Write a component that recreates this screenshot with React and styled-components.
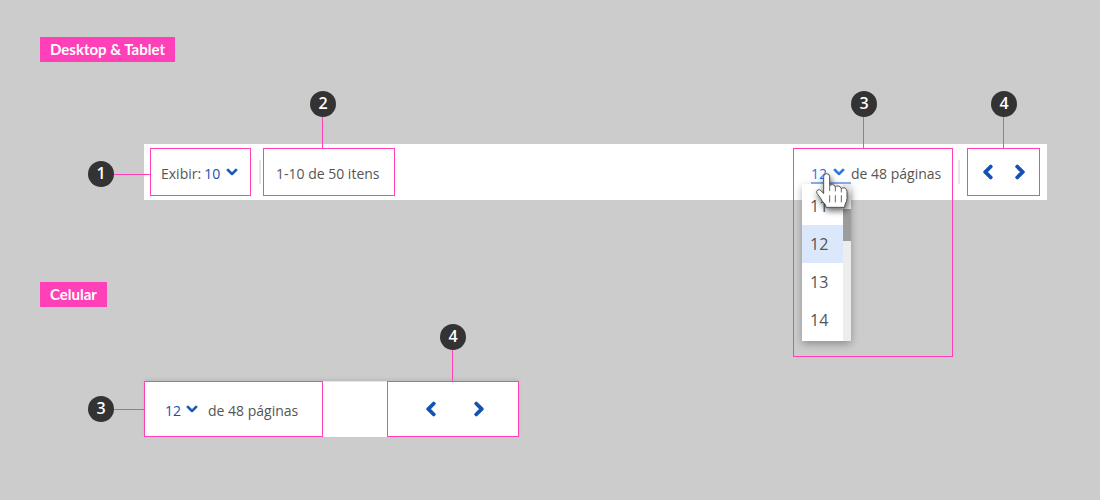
import React from "react";
import styled, { createGlobalStyle, css } from "styled-components";
import { FaChevronDown, FaChevronLeft, FaChevronRight } from "react-icons/fa";

const pink = "#ff40b8";
const blue = "#1351b4";
const hoverBlue = "#2670e8";
const textFont = '"Open Sans", "Noto Sans", sans-serif';
const labelFont = 'Lato, "Open Sans", sans-serif';

const GlobalStyle = createGlobalStyle`
  *, *::before, *::after { box-sizing: border-box; }
  body {
    margin: 0;
    background: #ccc;
    color: #555;
    font: 14px/24px ${textFont};
  }
`;

const Page = styled.main`
  padding: 37px 53px 60px 40px;
`;

const Section = styled.section`
  & + & { margin-top: 82px; }
`;

const Tag = styled.h2`
  width: fit-content;
  margin: 0;
  padding: 0 10px;
  background: ${pink};
  color: #fff;
  font: 700 15px/25px ${labelFont};
`;

const Bar = styled.nav`
  display: flex;
  align-items: flex-start;
  height: 56px;
  margin-left: 104px;
  background: #fff;
  ${(p) =>
    p.$compact
      ? css`
          max-width: 375px;
          margin-top: 74px;
          box-shadow: 0 -2px 3px rgba(0, 0, 0, 0.08), inset 0 1px #dbe8fb;
        `
      : css`
          margin-top: 82px;
          padding: 4px 7px 4px 6px;
        `}
`;

const Region = styled.div`
  position: relative;
  flex: none;
  width: ${(p) => p.$width}px;
  height: ${(p) => p.$height || 48}px;
  border: 1px solid ${pink};
`;

const Content = styled.div`
  display: flex;
  align-items: center;
  gap: ${(p) => p.$gap || 0}px;
  height: ${(p) => p.$height || 46}px;
  padding: 4px 0 0 ${(p) => p.$left}px;
  white-space: nowrap;
`;

const Divider = styled.span`
  flex: none;
  width: 2px;
  height: 24px;
  margin: 12px ${(p) => p.$after}px 0 ${(p) => p.$before}px;
  background: #e6e6e6;
`;

const Spacer = styled.span`
  flex: 1;
`;

const Callout = styled.span`
  position: absolute;
  display: flex;
  ${(p) =>
    p.$side === "left"
      ? css`
          right: calc(100% + 1px);
          top: ${p.$at}px;
          &::after {
            width: ${p.$line}px;
            height: 1px;
            margin-top: 13px;
          }
        `
      : css`
          flex-direction: column;
          bottom: calc(100% + 1px);
          left: ${p.$at}px;
          &::after {
            width: 1px;
            height: ${p.$line}px;
            margin-left: 12px;
          }
        `}
  &::after {
    content: "";
    background: ${pink};
  }
`;

const Badge = styled.span`
  width: 26px;
  height: 26px;
  border-radius: 50%;
  background: #333;
  color: #fff;
  font: 600 16px/25px ${textFont};
  text-align: center;
`;

const Picker = styled.span`
  position: relative;
  display: inline-flex;
  color: ${(p) => (p.$open ? hoverBlue : blue)};
  & > svg {
    position: absolute;
    top: 2px;
    right: ${(p) => p.$inset || 0}px;
    overflow: visible;
    stroke: currentColor;
    stroke-width: 40;
    pointer-events: none;
  }
`;

const Select = styled.select`
  appearance: none;
  width: ${(p) => p.$width}px;
  height: 20px;
  margin: 0;
  padding: 0;
  border: 0;
  border-radius: 0;
  background: none;
  color: inherit;
  font: inherit;
  line-height: 20px;
  cursor: pointer;
  outline: none;
  ${(p) => p.$open && "box-shadow: inset 0 -2px #8fb3f2;"}
`;

const Menu = styled.div`
  position: absolute;
  top: 100%;
  right: 0;
  display: flex;
  width: 49px;
  height: 157px;
  background: #fff;
  box-shadow: 0 3px 8px rgba(0, 0, 0, 0.3);
`;

const Options = styled.ul`
  flex: 1;
  margin: 0;
  padding: 3px 0 0;
  list-style: none;
`;

const Option = styled.li`
  height: 38px;
  padding-left: 8px;
  background: ${(p) => (p.$selected ? "#dbe8fb" : "transparent")};
  color: #555;
  font-size: 16px;
  line-height: 38px;
`;

const Track = styled.div`
  width: 8px;
  padding-top: 25px;
  background: #ededed;
`;

const Thumb = styled.div`
  height: 32px;
  background: #9c9c9c;
`;

const Pointer = styled.svg`
  && {
    top: 7px;
    left: 3px;
    right: auto;
    stroke: none;
    stroke-width: 3;
    filter: drop-shadow(1px 3px 3px rgba(0, 0, 0, 0.6));
  }
`;

const Arrow = styled.button`
  display: flex;
  align-items: center;
  justify-content: center;
  width: 32px;
  height: 32px;
  padding: 0;
  border: 0;
  background: none;
  color: ${blue};
  cursor: pointer;
  & > svg {
    overflow: visible;
    stroke: currentColor;
    stroke-width: 40;
  }
`;

const Arrows = styled.div`
  display: flex;
  align-items: center;
  justify-content: center;
  gap: ${(p) => p.$gap || 0}px;
  height: 100%;
  padding-left: ${(p) => p.$left || 0}px;
`;

function Mark({ n, side = "top", line = 31, at }) {
  return (
    <Callout $side={side} $line={line} $at={at}>
      <Badge>{n}</Badge>
    </Callout>
  );
}

function HandPointer() {
  return (
    <Pointer width="35" height="40" viewBox="0 0 105 120" aria-hidden="true">
      <path
        d="M29 68V17Q29 8 38 8Q47 8 47 17V44Q50 41 55 41Q62 41 64 48Q67 44 73 45Q80 46 82 53Q86 49 92 51Q99 54 99 62V82Q99 90 95 96Q92 101 92 109H36Q36 101 31 97Q24 92 20 82L9 67Q6 60 11 57Q17 54 22 60Z"
        fill="#fff"
        stroke="#555"
        strokeLinejoin="round"
      />
      <path
        d="M47 44V59M64 48V60M82 53V63M47 74V93M64 74V93M82 74V93"
        fill="none"
        stroke="#666"
        strokeLinecap="round"
      />
    </Pointer>
  );
}

function PageArrows({ gap, left }) {
  return (
    <Arrows $gap={gap} $left={left}>
      <Arrow type="button" aria-label="Página anterior">
        <FaChevronLeft size={16} />
      </Arrow>
      <Arrow type="button" aria-label="Próxima página">
        <FaChevronRight size={16} />
      </Arrow>
    </Arrows>
  );
}

export default function App() {
  return (
    <>
      <GlobalStyle />
      <Page>
        <Section>
          <Tag>Desktop &amp; Tablet</Tag>
          <Bar aria-label="Paginação desktop e tablet">
            <Region $width={101}>
              <Mark n={1} side="left" line={36} at={12} />
              <Content $left={10} $gap={3}>
                <label htmlFor="per-page">Exibir:</label>
                <Picker>
                  <Select id="per-page" $width={34} defaultValue="10">
                    <option>10</option>
                    <option>20</option>
                    <option>50</option>
                  </Select>
                  <FaChevronDown size={12} />
                </Picker>
              </Content>
            </Region>
            <Divider $before={8} $after={2} />
            <Region $width={132}>
              <Mark n={2} at={46} />
              <Content $left={12}>1-10 de 50 itens</Content>
            </Region>
            <Spacer />
            <Region $width={160} $height={209}>
              <Mark n={3} at={57} />
              <Content $left={17}>
                <Picker $open $inset={6}>
                  <Select id="page" aria-label="Página" $width={40} $open defaultValue="12">
                    <option>11</option>
                    <option>12</option>
                    <option>13</option>
                    <option>14</option>
                  </Select>
                  <FaChevronDown size={12} />
                  <Menu>
                    <Options role="listbox" aria-label="Páginas">
                      {[11, 12, 13, 14].map((n) => (
                        <Option key={n} role="option" aria-selected={n === 12} $selected={n === 12}>
                          {n}
                        </Option>
                      ))}
                    </Options>
                    <Track>
                      <Thumb />
                    </Track>
                  </Menu>
                  <HandPointer />
                </Picker>
                <span>de 48 páginas</span>
              </Content>
            </Region>
            <Divider $before={5} $after={7} />
            <Region $width={73}>
              <Mark n={4} at={23} />
              <PageArrows />
            </Region>
          </Bar>
        </Section>

        <Section>
          <Tag>Celular</Tag>
          <Bar $compact aria-label="Paginação celular">
            <Region $width={179} $height={56}>
              <Mark n={3} side="left" line={30} at={14} />
              <Content $left={20} $gap={10} $height={54}>
                <Picker>
                  <Select aria-label="Página" $width={33} defaultValue="12">
                    <option>11</option>
                    <option>12</option>
                    <option>13</option>
                  </Select>
                  <FaChevronDown size={12} />
                </Picker>
                <span>de 48 páginas</span>
              </Content>
            </Region>
            <Spacer />
            <Region $width={132} $height={56}>
              <Mark n={4} at={52} />
              <PageArrows gap={16} left={4} />
            </Region>
          </Bar>
        </Section>
      </Page>
    </>
  );
}
